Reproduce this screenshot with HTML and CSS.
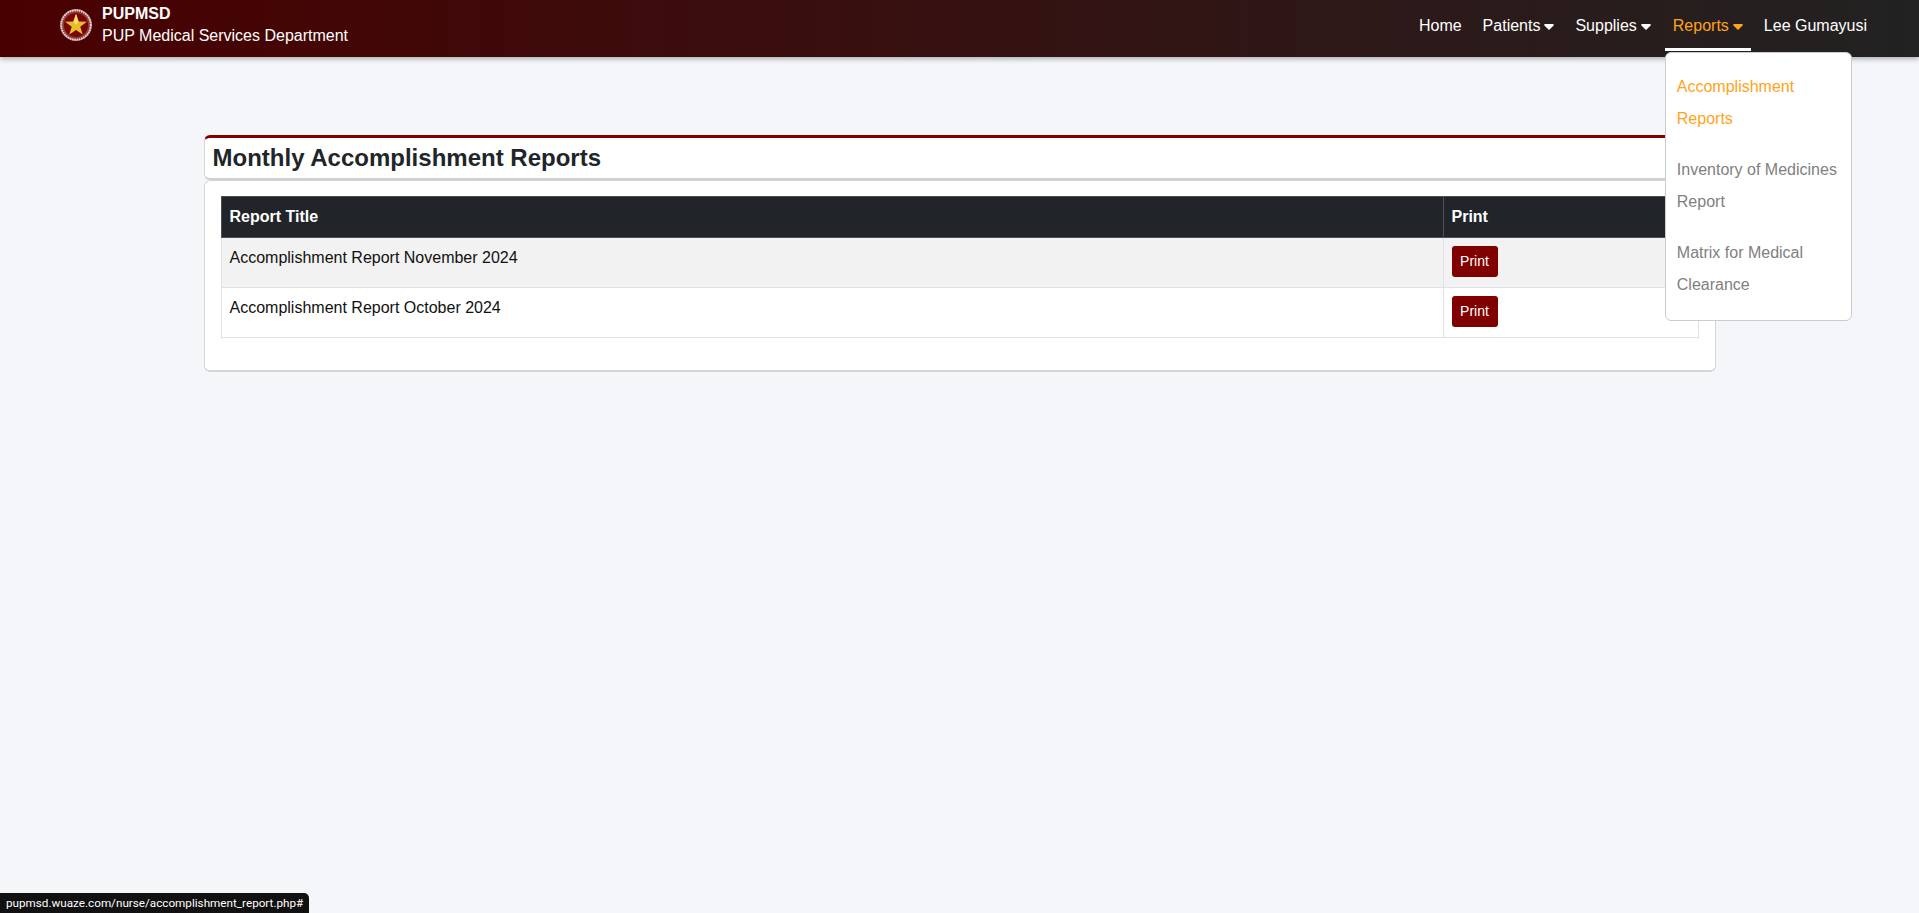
FILE: index.html
```html
<!DOCTYPE html>
<html lang="en">
<head>
    <meta charset="UTF-8">
    <title>Monthly Accomplishment Reports</title>
    <link rel="stylesheet" href="styles.css">
</head>
<body>
    <header class="topbar">
        <a class="brand" href="#">
            <svg class="brand-logo" viewBox="0 0 32 32" width="32" height="32">
                <circle cx="16" cy="16" r="16" fill="#b98a86"/>
                <circle cx="16" cy="16" r="14.6" fill="#8c3a3a" stroke="#eadbd8" stroke-width="1.8" stroke-dasharray="1.4 .9"/>
                <circle cx="16" cy="16" r="12" fill="#7a0505"/>
                <polygon points="16,5 18.6,12.6 26.9,12.8 20.3,17.8 22.7,25.6 16,21 9.3,25.6 11.7,17.8 5.1,12.8 13.4,12.6" fill="#e6bd2c"/>
                <polygon points="16,5 18.6,12.6 16,16 13.4,12.6" fill="#f6df6e"/>
            </svg>
            <span class="brand-text">
                <b>PUPMSD</b>
                <span>PUP Medical Services Department</span>
            </span>
        </a>
        <nav class="nav">
            <a class="nav-link" href="#">Home</a>
            <a class="nav-link" href="#">Patients
                <svg class="caret" viewBox="0 0 12 7"><path d="M1.2 0h9.6c.9 0 1.4 1.1.7 1.8L6.7 6.6c-.4.4-1 .4-1.4 0L.5 1.8C-.2 1.1.3 0 1.2 0z"/></svg>
            </a>
            <a class="nav-link" href="#">Supplies
                <svg class="caret" viewBox="0 0 12 7"><path d="M1.2 0h9.6c.9 0 1.4 1.1.7 1.8L6.7 6.6c-.4.4-1 .4-1.4 0L.5 1.8C-.2 1.1.3 0 1.2 0z"/></svg>
            </a>
            <div class="nav-item">
                <a class="nav-link active" href="#">Reports
                    <svg class="caret" viewBox="0 0 12 7"><path d="M1.2 0h9.6c.9 0 1.4 1.1.7 1.8L6.7 6.6c-.4.4-1 .4-1.4 0L.5 1.8C-.2 1.1.3 0 1.2 0z"/></svg>
                </a>
                <div class="dropdown">
                    <a class="dropdown-link current" href="#">Accomplishment Reports</a>
                    <a class="dropdown-link" href="#">Inventory of Medicines Report</a>
                    <a class="dropdown-link" href="#">Matrix for Medical Clearance</a>
                </div>
            </div>
            <a class="nav-link" href="#">Lee Gumayusi</a>
        </nav>
    </header>

    <main class="content">
        <div class="card title-card">
            <h1>Monthly Accomplishment Reports</h1>
        </div>
        <div class="card table-card">
            <table class="report-table">
                <thead>
                    <tr>
                        <th class="col-title">Report Title</th>
                        <th>Print</th>
                    </tr>
                </thead>
                <tbody>
                    <tr>
                        <td>Accomplishment Report November 2024</td>
                        <td><a class="btn-print" href="#">Print</a></td>
                    </tr>
                    <tr>
                        <td>Accomplishment Report October 2024</td>
                        <td><a class="btn-print" href="#">Print</a></td>
                    </tr>
                </tbody>
            </table>
        </div>
    </main>

    <div class="status-link">pupmsd.wuaze.com/nurse/accomplishment_report.php#</div>
</body>
</html>
```

FILE: styles.css
```css
* {
    box-sizing: border-box;
}

body {
    margin: 0;
    min-height: 913px;
    background: #f4f6f9;
    color: #212529;
    font-family: "Liberation Sans", Arial, sans-serif;
    font-size: 16px;
    line-height: 24px;
}

a {
    text-decoration: none;
}

/* top bar */
.topbar {
    height: 57px;
    padding: 0 44px 0 60px;
    display: flex;
    justify-content: space-between;
    background: linear-gradient(to right, #4a0000, #222222);
    box-shadow: 0 2px 5px rgba(0, 0, 0, 0.3);
}

.brand {
    display: flex;
    align-items: center;
    gap: 10px;
    color: #fff;
}

.brand-logo {
    flex: none;
    margin-top: -7px;
}

.brand-text {
    display: flex;
    flex-direction: column;
    line-height: 22px;
    margin-top: -8px;
}

.nav {
    display: flex;
    gap: 5px;
    height: 51px;
}

.nav-item {
    position: relative;
    display: flex;
    margin-left: 1px;
}

.nav-link {
    display: flex;
    align-items: center;
    gap: 4px;
    padding: 4px 8px 0;
    height: 51px;
    border-bottom: 3px solid transparent;
    color: #fff;
    white-space: nowrap;
}

.nav-link.active {
    color: #ffa31a;
    border-bottom-color: #fff;
}

.caret {
    width: 10px;
    height: 6px;
    fill: currentColor;
    margin-top: 1px;
}

.dropdown {
    position: absolute;
    top: 52px;
    left: 0;
    z-index: 10;
    width: 187px;
    padding: 18px 10px 0 11px;
    background: #fff;
    border: 1px solid #ccc;
    border-radius: 6px;
    line-height: 32px;
}

.dropdown-link {
    display: block;
    margin-bottom: 19px;
    color: #808080;
}

.dropdown-link.current {
    color: #ffa31a;
}

/* page */
.content {
    width: 1512px;
    margin: 78px auto 0;
}

.card {
    background: #fff;
    border: 1px solid #d5d5d5;
    border-radius: 6px;
}

.title-card {
    height: 45px;
    padding: 4px 8px;
    border-top: 3px solid #800000;
    border-bottom: 2px solid #d0d0d0;
}

.title-card h1 {
    margin: 0;
    font-size: 24px;
    line-height: 32px;
    font-weight: bold;
}

.table-card {
    margin-top: 0;
    padding: 15px 16px 32px;
    border-bottom-width: 2px;
}

.report-table {
    width: 100%;
    border-collapse: collapse;
}

.report-table th,
.report-table td {
    padding: 8px;
    text-align: left;
    vertical-align: top;
}

.report-table th {
    background: #212529;
    color: #fff;
    border: 1px solid #4b5157;
}

.report-table td {
    height: 50px;
    color: #111;
    border: 1px solid #dee2e6;
}

.report-table .col-title {
    width: 1222px;
}

.report-table tbody tr:nth-child(odd) td {
    background: #f2f2f2;
}

.btn-print {
    display: block;
    width: 46px;
    height: 31px;
    background: #800000;
    color: #fff;
    border-radius: 3px;
    font-size: 14px;
    line-height: 30px;
    text-align: center;
}

.status-link {
    position: fixed;
    left: 0;
    bottom: 0;
    height: 20px;
    padding: 0 6px;
    background: #111;
    border-top-right-radius: 5px;
    color: #fff;
    font-family: Roboto, sans-serif;
    font-size: 11.7px;
    line-height: 20px;
}
```
